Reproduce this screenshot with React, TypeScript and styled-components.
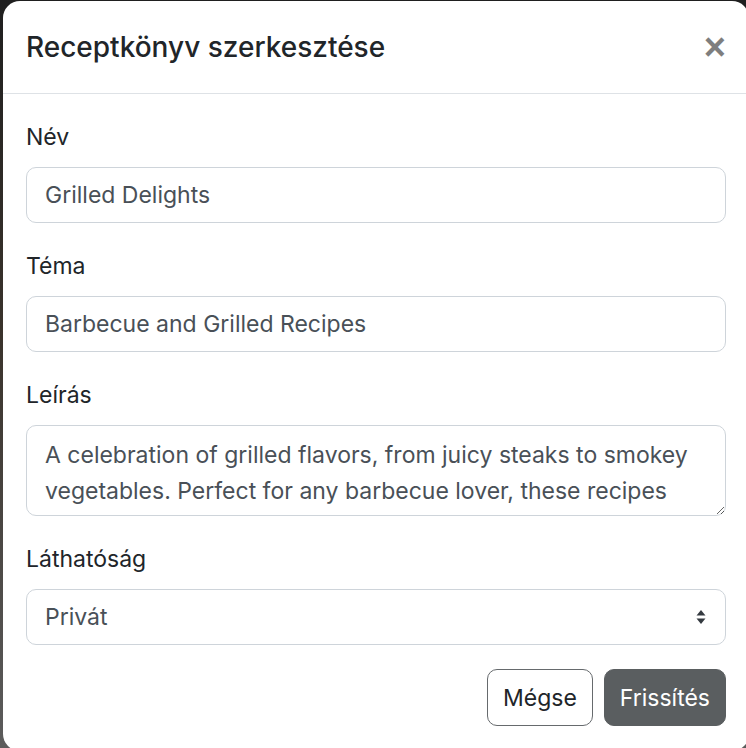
import { createGlobalStyle, styled } from 'styled-components';

const GlobalStyle = createGlobalStyle`
  html, body {
    margin: 0;
    padding: 0;
    height: 100%;
    overflow: hidden;
  }
  body {
    background: linear-gradient(to bottom, #1f1f1f 0%, #3a332c 45%, #5c5c5c 100%);
    font-family: Inter, "Noto Sans", "Liberation Sans", sans-serif;
    color: #212529;
  }
`;

type Field = {
  label: string;
  value: string;
  kind: 'input' | 'textarea' | 'select';
};

const fields: Field[] = [
  { label: 'Név', value: 'Grilled Delights', kind: 'input' },
  { label: 'Téma', value: 'Barbecue and Grilled Recipes', kind: 'input' },
  {
    label: 'Leírás',
    value:
      'A celebration of grilled flavors, from juicy steaks to smokey vegetables. Perfect for any barbecue lover, these recipes bring the smoky taste of summer to your table.',
    kind: 'textarea',
  },
  { label: 'Láthatóság', value: 'Privát', kind: 'select' },
];

export default function App() {
  return (
    <>
      <GlobalStyle />
      <Modal>
        <Header>
          <Title>Receptkönyv szerkesztése</Title>
          <CloseButton aria-label="Bezárás">×</CloseButton>
        </Header>
        <Body>
          {fields.map((f) => (
            <Group key={f.label}>
              <Label>{f.label}</Label>
              {f.kind === 'input' && <Input defaultValue={f.value} />}
              {f.kind === 'textarea' && <TextArea defaultValue={f.value} />}
              {f.kind === 'select' && (
                <SelectWrap>
                  <Select defaultValue={f.value}>
                    <option>Privát</option>
                    <option>Nyilvános</option>
                  </Select>
                  <Arrows width="10" height="16" viewBox="0 0 10 16">
                    <path d="M5 1 L9.5 6.5 H0.5 Z" fill="#343a40" />
                    <path d="M5 15 L9.5 9.5 H0.5 Z" fill="#343a40" />
                  </Arrows>
                </SelectWrap>
              )}
            </Group>
          ))}
          <Footer>
            <Button $variant="outline">Mégse</Button>
            <Button $variant="solid">Frissítés</Button>
          </Footer>
        </Body>
      </Modal>
    </>
  );
}

const Modal = styled.div`
  box-sizing: border-box;
  margin: 1px 0 0 3px;
  width: 746px;
  height: 750px;
  background: #fff;
  border-radius: 17px;
  display: flex;
  flex-direction: column;
`;

const Header = styled.div`
  display: flex;
  align-items: center;
  justify-content: space-between;
  padding: 0 23px 0 23px;
  height: 93px;
  border-bottom: 1px solid #dee2e6;
  box-sizing: border-box;
`;

const Title = styled.h5`
  margin: 0;
  font-size: 28px;
  font-weight: 500;
  line-height: 41px;
  color: #212529;
`;

const CloseButton = styled.button`
  border: none;
  background: none;
  padding: 0;
  font-family: "Liberation Sans", Arial, sans-serif;
  font-size: 38px;
  font-weight: 700;
  line-height: 1;
  color: #000;
  opacity: 0.5;
  cursor: pointer;
`;

const Body = styled.div`
  padding: 27px 23px 0 23px;
  display: flex;
  flex-direction: column;
`;

const Group = styled.div`
  display: flex;
  flex-direction: column;

  & + & {
    margin-top: 27px;
  }
`;

const Label = styled.label`
  font-size: 23px;
  line-height: 33px;
  margin-bottom: 13px;
  color: #212529;
`;

const controlBase = `
  box-sizing: border-box;
  width: 700px;
  border: 1px solid #ced4da;
  border-radius: 10px;
  padding: 0 18px;
  font-family: Inter, "Noto Sans", "Liberation Sans", sans-serif;
  font-size: 23px;
  color: #495057;
  background: #fff;
  outline: none;
`;

const Input = styled.input`
  ${controlBase}
  height: 56px;
  line-height: 33px;
`;

const TextArea = styled.textarea`
  ${controlBase}
  height: 91px;
  padding: 11px 18px;
  line-height: 36px;
  resize: vertical;
  overflow: hidden;
`;

const SelectWrap = styled.div`
  position: relative;
  width: 700px;
`;

const Select = styled.select`
  ${controlBase}
  height: 56px;
  appearance: none;
  -webkit-appearance: none;
`;

const Arrows = styled.svg`
  position: absolute;
  right: 20px;
  top: 20px;
  pointer-events: none;
`;

const Footer = styled.div`
  display: flex;
  justify-content: flex-end;
  gap: 11px;
  margin-top: 24px;
`;

const Button = styled.button<{ $variant: 'outline' | 'solid' }>`
  box-sizing: border-box;
  height: 57px;
  padding: 0 15px;
  border-radius: 10px;
  font-family: Inter, "Noto Sans", "Liberation Sans", sans-serif;
  font-size: 23px;
  border: 1px solid ${({ $variant }) => ($variant === 'solid' ? '#5a5e60' : '#666a6d')};
  background: ${({ $variant }) => ($variant === 'solid' ? '#5a5e60' : '#fff')};
  color: ${({ $variant }) => ($variant === 'solid' ? '#fff' : '#212529')};
  cursor: pointer;
`;
